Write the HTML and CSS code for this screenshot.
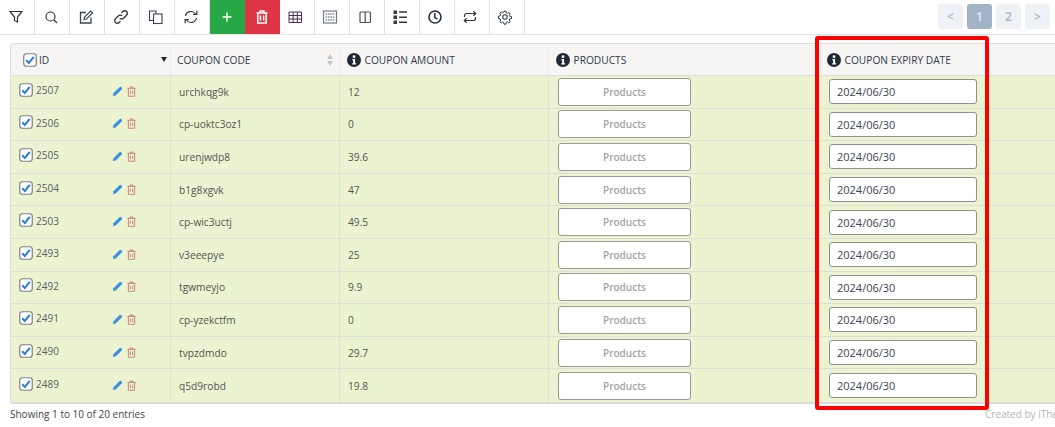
FILE: index.html
```html
<!DOCTYPE html>
<html lang="en">
<head>
<meta charset="utf-8">
<title>Coupons</title>
<link rel="stylesheet" href="styles.css">
</head>
<body>
<svg class="defs" width="0" height="0" aria-hidden="true">
  <symbol id="cb" viewBox="0 0 14 14"><rect x=".75" y=".75" width="12.5" height="12.5" rx="2.5" fill="#fff" stroke="#7d8088" stroke-width="1.2"/><path d="M3.2 7.3 5.8 10l5-6.2" fill="none" stroke="#2f7fd0" stroke-width="2"/></symbol>
  <symbol id="pen" viewBox="0 0 12 12"><path d="M1 11l.6-3L8.4 1.2a1 1 0 0 1 1.4 0l1 1a1 1 0 0 1 0 1.4L4 10.400z" fill="#3f8fe0"/></symbol>
  <symbol id="trash" viewBox="0 0 10 12"><path d="M.5 2.500h9M3.300 2.300V1h3.400v1.300M1.500 2.500v8.800h7V2.500M3.700 5v4M6.300 5v4" fill="none" stroke="#c47a72" stroke-width="1"/></symbol>
  <symbol id="info" viewBox="0 0 14 14"><circle cx="7" cy="7" r="7" fill="#1f2a36"/><circle cx="7" cy="3.700" r="1.400" fill="#fff"/><path d="M5.400 6h2.700v4.300h1v1.200H5.200v-1.200h1V7.200h-.8z" fill="#fff"/></symbol>
</svg>
<header class="toolbar">
  <nav class="tools">
    <button class="tool"><svg width="16" height="16" viewBox="0 0 16 16"><path d="M2 2.500h12L9.500 8v5l-3-1.500V8z" fill="none" stroke="#2b3440" stroke-width="1.200"/></svg></button>
    <button class="tool"><svg width="16" height="16" viewBox="0 0 16 16"><circle cx="7.500" cy="7.500" r="4.500" fill="none" stroke="#2b3440" stroke-width="1.200"/><path d="M11 11l3 3" stroke="#2b3440" stroke-width="1.200"/></svg></button>
    <button class="tool"><svg width="16" height="16" viewBox="0 0 16 16"><path d="M13 8.500V14H2.500V3.500H8" fill="none" stroke="#3a4450" stroke-width="1.300"/><path d="M6 10.500l.6-2.500L12.500 2l2 2-6 6z" fill="none" stroke="#3a4450" stroke-width="1.200"/></svg></button>
    <button class="tool"><svg width="16" height="16" viewBox="0 0 16 16"><path d="M6.800 9.200a2.600 2.600 0 0 0 3.700 0l3-3a2.600 2.600 0 0 0-3.700-3.700L8.600 3.700M9.200 6.800a2.600 2.600 0 0 0-3.700 0l-3 3a2.600 2.600 0 0 0 3.700 3.700l1.200-1.200" fill="none" stroke="#2b3440" stroke-width="1.300"/></svg></button>
    <button class="tool"><svg width="16" height="16" viewBox="0 0 16 16"><path d="M5.500 11.500H1.500V2h6.500v3" fill="none" stroke="#3a4450" stroke-width="1.100"/><rect x="5.500" y="5" width="8.500" height="9.500" fill="#fff" stroke="#3a4450" stroke-width="1.100"/></svg></button>
    <button class="tool"><svg width="16" height="16" viewBox="0 0 16 16"><path d="M2.500 7a5.500 5.500 0 0 1 10-2M13.500 9a5.500 5.500 0 0 1-10 2" fill="none" stroke="#2b3440" stroke-width="1.200"/><path d="M13.800 1.800v3.700h-3.700M2.200 14.200v-3.700h3.700" fill="none" stroke="#2b3440" stroke-width="1.200"/></svg></button>
    <button class="tool tool-add"><svg width="12" height="12" viewBox="0 0 12 12"><path d="M6 1.500v9M1.500 6h9" stroke="#fff" stroke-width="1.500"/></svg></button>
    <button class="tool tool-del"><svg width="12" height="14" viewBox="0 0 12 14"><path d="M.5 3h11M4 2.800V1h4v1.800M1.800 3v10h8.400V3M4.400 5.500v5M7.600 5.500v5" fill="none" stroke="#fff" stroke-width="1.500"/></svg></button>
    <button class="tool"><svg width="16" height="16" viewBox="0 0 16 16"><path d="M2 3h12.500v10.500H2zM2 6.500h12.500M2 10h12.500M6.200 3v10.500M10.300 3v10.500" fill="none" stroke="#4d2a5c" stroke-width="1"/></svg></button>
    <button class="tool"><svg width="16" height="16" viewBox="0 0 16 16"><rect x="1.500" y="2" width="13" height="12" fill="none" stroke="#77797e" stroke-width="1.200"/><path d="M3.500 5h9M3.500 8h9M3.500 11h9" stroke="#3c566a" stroke-width="1.100" stroke-dasharray="1.600 .8"/></svg></button>
    <button class="tool"><svg width="16" height="16" viewBox="0 0 16 16"><rect x="3" y="3" width="10.500" height="10.500" rx="1" fill="none" stroke="#45505c" stroke-width="1.200"/><path d="M8.200 3v10.500" stroke="#45505c" stroke-width="1.200"/></svg></button>
    <button class="tool"><svg width="16" height="16" viewBox="0 0 16 16"><path d="M1.500 1.500h3.500v3.500H1.500zM1.500 6.500h3.500v3.500H1.500zM1.500 11.500h3.500v3.500H1.500z" fill="#303a46"/><path d="M7 3h8M7 8.200h8M7 13.300h8" stroke="#303a46" stroke-width="1.500"/></svg></button>
    <button class="tool"><svg width="16" height="16" viewBox="0 0 16 16"><circle cx="8" cy="8" r="6" fill="none" stroke="#253040" stroke-width="1.600"/><path d="M7.800 4v4.300l2.600 1.900" fill="none" stroke="#253040" stroke-width="1.500"/></svg></button>
    <button class="tool"><svg width="16" height="16" viewBox="0 0 16 16"><path d="M2.500 8V6.500A2 2 0 0 1 4.500 4.500h9M11.300 2.300l2.400 2.200-2.400 2.200M13.500 8v1.500a2 2 0 0 1-2 2h-9M4.700 9.300l-2.400 2.200 2.400 2.200" fill="none" stroke="#303a46" stroke-width="1.200"/></svg></button>
    <button class="tool"><svg width="16" height="16" viewBox="0 0 16 16"><circle cx="8" cy="8" r="2.200" fill="none" stroke="#303a46" stroke-width="1.100"/><path d="M6.900 1.500h2.200l.3 1.900 1.300.6 1.600-1.100 1.500 1.500-1.100 1.600.6 1.300 1.900.3v2.200l-1.900.3-.6 1.300 1.100 1.600-1.500 1.500-1.600-1.100-1.300.6-.3 1.900H6.900l-.3-1.900-1.300-.6-1.600 1.100-1.500-1.500 1.100-1.600-.6-1.300-1.900-.3V7l1.900-.3.6-1.300-1.100-1.600 1.500-1.500 1.600 1.100 1.300-.6z" transform="translate(.8 .8) scale(.9)" fill="none" stroke="#303a46" stroke-width="1.100"/></svg></button>
  </nav>
  <nav class="pager">
    <span class="page">&lt;</span><span class="page page-on">1</span><span class="page">2</span><span class="page">&gt;</span>
  </nav>
</header>
<main class="wrap">
  <section class="grid">
    <div class="row head">
      <div class="cell c-id"><svg class="cb-h"><use href="#cb"/></svg><span>ID</span><i class="desc"></i></div>
      <div class="cell c-code"><span>COUPON CODE</span><svg class="sort" width="6" height="12" viewBox="0 0 6 12"><path d="M3 0l3 5H0zM3 12l3-5H0z" fill="#c4c6c8"/></svg></div>
      <div class="cell c-amt"><svg class="info"><use href="#info"/></svg><span>COUPON AMOUNT</span></div>
      <div class="cell c-prod"><svg class="info"><use href="#info"/></svg><span>PRODUCTS</span></div>
      <div class="cell c-exp"><svg class="info"><use href="#info"/></svg><span>COUPON EXPIRY DATE</span></div>
    </div>
    <div class="row"><div class="cell c-id"><svg class="cb"><use href="#cb"/></svg><span class="num">2507</span><svg class="pen"><use href="#pen"/></svg><svg class="trash"><use href="#trash"/></svg></div><div class="cell c-code">urchkqg9k</div><div class="cell c-amt">12</div><div class="cell c-prod"><span class="btn">Products</span></div><div class="cell c-exp"><span class="date">2024/06/30</span></div></div>
    <div class="row"><div class="cell c-id"><svg class="cb"><use href="#cb"/></svg><span class="num">2506</span><svg class="pen"><use href="#pen"/></svg><svg class="trash"><use href="#trash"/></svg></div><div class="cell c-code">cp-uoktc3oz1</div><div class="cell c-amt">0</div><div class="cell c-prod"><span class="btn">Products</span></div><div class="cell c-exp"><span class="date">2024/06/30</span></div></div>
    <div class="row"><div class="cell c-id"><svg class="cb"><use href="#cb"/></svg><span class="num">2505</span><svg class="pen"><use href="#pen"/></svg><svg class="trash"><use href="#trash"/></svg></div><div class="cell c-code">urenjwdp8</div><div class="cell c-amt">39.6</div><div class="cell c-prod"><span class="btn">Products</span></div><div class="cell c-exp"><span class="date">2024/06/30</span></div></div>
    <div class="row"><div class="cell c-id"><svg class="cb"><use href="#cb"/></svg><span class="num">2504</span><svg class="pen"><use href="#pen"/></svg><svg class="trash"><use href="#trash"/></svg></div><div class="cell c-code">b1g8xgvk</div><div class="cell c-amt">47</div><div class="cell c-prod"><span class="btn">Products</span></div><div class="cell c-exp"><span class="date">2024/06/30</span></div></div>
    <div class="row"><div class="cell c-id"><svg class="cb"><use href="#cb"/></svg><span class="num">2503</span><svg class="pen"><use href="#pen"/></svg><svg class="trash"><use href="#trash"/></svg></div><div class="cell c-code">cp-wic3uctj</div><div class="cell c-amt">49.5</div><div class="cell c-prod"><span class="btn">Products</span></div><div class="cell c-exp"><span class="date">2024/06/30</span></div></div>
    <div class="row"><div class="cell c-id"><svg class="cb"><use href="#cb"/></svg><span class="num">2493</span><svg class="pen"><use href="#pen"/></svg><svg class="trash"><use href="#trash"/></svg></div><div class="cell c-code">v3eeepye</div><div class="cell c-amt">25</div><div class="cell c-prod"><span class="btn">Products</span></div><div class="cell c-exp"><span class="date">2024/06/30</span></div></div>
    <div class="row"><div class="cell c-id"><svg class="cb"><use href="#cb"/></svg><span class="num">2492</span><svg class="pen"><use href="#pen"/></svg><svg class="trash"><use href="#trash"/></svg></div><div class="cell c-code">tgwmeyjo</div><div class="cell c-amt">9.9</div><div class="cell c-prod"><span class="btn">Products</span></div><div class="cell c-exp"><span class="date">2024/06/30</span></div></div>
    <div class="row"><div class="cell c-id"><svg class="cb"><use href="#cb"/></svg><span class="num">2491</span><svg class="pen"><use href="#pen"/></svg><svg class="trash"><use href="#trash"/></svg></div><div class="cell c-code">cp-yzekctfm</div><div class="cell c-amt">0</div><div class="cell c-prod"><span class="btn">Products</span></div><div class="cell c-exp"><span class="date">2024/06/30</span></div></div>
    <div class="row"><div class="cell c-id"><svg class="cb"><use href="#cb"/></svg><span class="num">2490</span><svg class="pen"><use href="#pen"/></svg><svg class="trash"><use href="#trash"/></svg></div><div class="cell c-code">tvpzdmdo</div><div class="cell c-amt">29.7</div><div class="cell c-prod"><span class="btn">Products</span></div><div class="cell c-exp"><span class="date">2024/06/30</span></div></div>
    <div class="row"><div class="cell c-id"><svg class="cb"><use href="#cb"/></svg><span class="num">2489</span><svg class="pen"><use href="#pen"/></svg><svg class="trash"><use href="#trash"/></svg></div><div class="cell c-code">q5d9robd</div><div class="cell c-amt">19.8</div><div class="cell c-prod"><span class="btn">Products</span></div><div class="cell c-exp"><span class="date">2024/06/30</span></div></div>
  </section>
  <footer class="foot"><span class="entries">Showing 1 to 10 of 20 entries</span><span class="credit">Created by iThemeland</span></footer>
  <div class="highlight"></div>
</main>
</body>
</html>
```
FILE: styles.css
```css
* { box-sizing: border-box; }
html, body { margin: 0; height: 427px; overflow: hidden; background: #fff; }
body { font-family: "Open Sans", "Noto Sans", sans-serif; font-size: 10.2px; color: #444; position: relative; }
.defs { position: absolute; }
.toolbar { display: flex; justify-content: space-between; height: 35px; border-bottom: 1px solid #e2e2e2; }
.tools { display: flex; }
.tool { width: 35px; height: 34px; padding: 0 3px 1px 0; border: 0; border-right: 1px solid #e2e2e2; background: #fff; display: flex; align-items: center; justify-content: center; }
.tool-add, .tool-del { padding: 0 1px 1px 0; }
.tool-add { background: #28a745; border-right: 0; width: 34.500px; }
.tool-del { background: #dc3545; border-right: 0; width: 34.500px; margin-left: .5px; }
.pager { display: flex; gap: 4px; padding: 4px 5px 0 0; }
.page { width: 25px; height: 25px; border-radius: 3px; background: #eef1f5; color: #aab4c2; display: flex; align-items: center; justify-content: center; font-size: 12px; font-weight: 600; }
.page-on { background: #a3b3c7; color: #e8edf3; }
.wrap { padding: 8px 0 0 10px; }
.grid { border: 1px solid #dcdcdc; border-width: 1px 0 2px 1px; border-radius: 4px 0 0 4px; overflow: hidden; }
.row { display: grid; height: 32.600px; background: #ecf3d0; border-bottom: 1px solid #dcdedb; grid-template-columns: 160px 169px 209px 270px 1fr; }
.row:last-child { border-bottom: 0; }
.head { height: 32px; background: #f6f5f4; font-weight: 500; font-size: 10.200px; }
.cell { display: flex; align-items: center; border-right: 1px solid #dedfdc; padding-left: 8px; min-width: 0; color: #555; }
.head .cell { color: #2f3b4a; border-right-color: #eee; }
.row .c-prod, .row .c-exp { border-right: 0; }
.c-id { padding-left: 8px; }
.c-prod { padding-left: 9px; }
.c-exp { padding-left: 10px; }
.head .c-code { padding-left: 6px; justify-content: space-between; padding-right: 6px; }
.head .c-amt { padding-left: 7px; }
.head .c-prod { padding-left: 7px; }
.head .c-exp { padding-left: 8px; }
.cb-h { width: 14px; height: 14px; margin: 0 2px 0 4px; }
.cb { width: 14px; height: 14px; margin: -4px 3px 0 0; }
.num { font-size: 10px; margin-top: -3px; color: #5a5f66; }
.desc { width: 0; height: 0; margin-left: auto; margin-right: 3px; border: 3.500px solid transparent; border-top: 5px solid #222; border-bottom: 0; }
.info { width: 14px; height: 14px; margin-right: 3.500px; flex: none; }
.pen { width: 11px; height: 11px; margin: -1px 0 0 53px; }
.trash { width: 9px; height: 11px; margin: -1px 0 0 4px; }
.btn { width: 133px; height: 28px; border: 1px solid #9a9a98; border-radius: 3px; background: #fff; display: flex; align-items: center; justify-content: center; font-weight: 600; font-size: 10px; color: #a3a3a3; }
.date { width: 148px; height: 25px; border: 1px solid #909090; border-radius: 3px; background: #fff; display: flex; align-items: center; padding-left: 7px; font-size: 11px; color: #3d4450; }
.foot { display: flex; padding-top: 3px; font-size: 10px; color: #444; white-space: nowrap; }
.entries { flex: 0 0 975px; }
.credit { color: #b5b5b5; }
.highlight { position: absolute; left: 815px; top: 36px; width: 174px; height: 374px; border: 4px solid #fd0000; border-radius: 3px; pointer-events: none; }
```
